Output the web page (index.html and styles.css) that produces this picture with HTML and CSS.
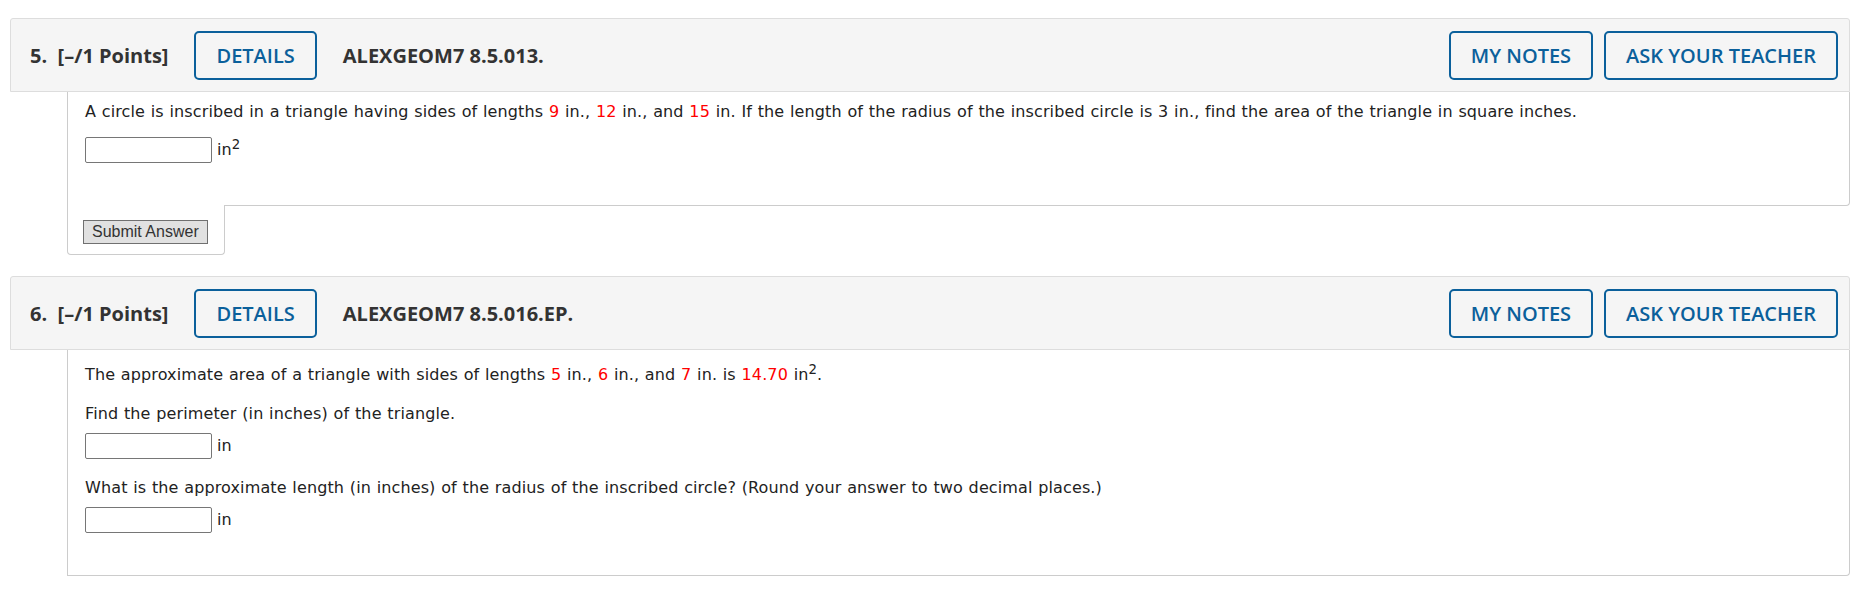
FILE: index.html
```html
<!DOCTYPE html>
<html lang="en">
<head>
  <meta charset="UTF-8" />
  <title>Assignment</title>
  <link rel="stylesheet" href="styles.css">
</head>
<body>
  <div class="page">

    <div class="question">
      <div class="q-head">
        <span class="q-num">5.&nbsp; [–/1 Points]</span>
        <button class="head-btn">DETAILS</button>
        <span class="q-code">ALEXGEOM7 8.5.013.</span>
        <div class="head-right">
          <button class="head-btn">MY NOTES</button>
          <button class="head-btn">ASK YOUR TEACHER</button>
        </div>
      </div>
      <div class="q-body">
        <p class="stmt stmt-tight">A circle is inscribed in a triangle having sides of lengths <span class="val">9</span> in., <span class="val">12</span> in., and <span class="val">15</span> in. If the length of the radius of the inscribed circle is 3 in., find the area of the triangle in square inches.</p>
        <div class="answer">
          <input type="text" class="ans-input">
          <span class="unit">in<sup>2</sup></span>
        </div>
      </div>
      <div class="submit-tab">
        <button class="submit-btn">Submit Answer</button>
      </div>
    </div>

    <div class="question">
      <div class="q-head">
        <span class="q-num">6.&nbsp; [–/1 Points]</span>
        <button class="head-btn">DETAILS</button>
        <span class="q-code">ALEXGEOM7 8.5.016.EP.</span>
        <div class="head-right">
          <button class="head-btn">MY NOTES</button>
          <button class="head-btn">ASK YOUR TEACHER</button>
        </div>
      </div>
      <div class="q-body">
        <p class="stmt stmt-first">The approximate area of a triangle with sides of lengths <span class="val">5</span> in., <span class="val">6</span> in., and <span class="val">7</span> in. is <span class="val">14.70</span> in<sup>2</sup>.</p>
        <p class="prompt">Find the perimeter (in inches) of the triangle.</p>
        <div class="answer">
          <input type="text" class="ans-input">
          <span class="unit">in</span>
        </div>
        <p class="prompt">What is the approximate length (in inches) of the radius of the inscribed circle? (Round your answer to two decimal places.)</p>
        <div class="answer">
          <input type="text" class="ans-input">
          <span class="unit">in</span>
        </div>
      </div>
    </div>

  </div>
</body>
</html>
```

FILE: styles.css
```css
body {
  margin: 0;
  font-family: "DejaVu Sans", Verdana, sans-serif;
  font-size: 16px;
  color: #222;
  background-color: #fff;
}
.page {
  padding: 18px 3px 0 10px;
}
.question {
  margin-bottom: 21px;
}
.q-head {
  display: flex;
  align-items: center;
  height: 74px;
  box-sizing: border-box;
  padding: 0 11px 0 19px;
  background-color: #f5f5f5;
  border: 1px solid #ddd;
  border-radius: 3px 3px 0 0;
  font-family: "Open Sans", sans-serif;
  font-size: 20px;
  font-weight: 700;
  color: #333;
}
.q-num {
  margin-right: 26px;
}
.q-code {
  margin-left: 26px;
}
.head-right {
  margin-left: auto;
  display: flex;
  gap: 11px;
}
.head-btn {
  height: 49px;
  padding: 0 20px;
  background: transparent;
  border: 2px solid #0b609b;
  border-radius: 5px;
  font-family: "Open Sans", sans-serif;
  font-size: 20px;
  font-weight: 600;
  color: #0b609b;
  cursor: pointer;
}
.q-body {
  margin-left: 57px;
  padding: 10px 20px 23px 17px;
  border: 1px solid #ccc;
  border-top: none;
  border-radius: 0 0 4px 0;
  letter-spacing: 0.12px;
  word-spacing: 0.5px;
}
.q-body p {
  margin: 0;
  line-height: 20px;
}
.stmt {
  margin-bottom: 19px !important;
}
.stmt-tight {
  margin-bottom: 15px !important;
}
.stmt-first {
  margin-top: 5px !important;
}
.prompt {
  margin-bottom: 9px !important;
}
.val {
  color: #f00;
}
sup {
  line-height: 0;
}
.answer {
  display: flex;
  align-items: center;
  margin-bottom: 19px;
}
.ans-input {
  width: 127px;
  height: 26px;
  box-sizing: border-box;
  margin: 0 5px 0 0;
  border: 1px solid #767676;
  border-radius: 2px;
  background-color: #fff;
}
.unit {
  line-height: 20px;
}
.submit-tab {
  width: max-content;
  margin: -1px 0 0 57px;
  padding: 15px 16px 10px 15px;
  background-color: #fff;
  border: 1px solid #ccc;
  border-top: none;
  border-radius: 0 0 4px 4px;
}
.submit-btn {
  display: block;
  height: 24px;
  padding: 0 8px;
  background-color: #e1e1e1;
  border: 1px solid #707070;
  border-radius: 0;
  font-family: "Liberation Sans", Arial, sans-serif;
  font-size: 16px;
  letter-spacing: 0;
  word-spacing: 0;
  color: #333;
}
```
